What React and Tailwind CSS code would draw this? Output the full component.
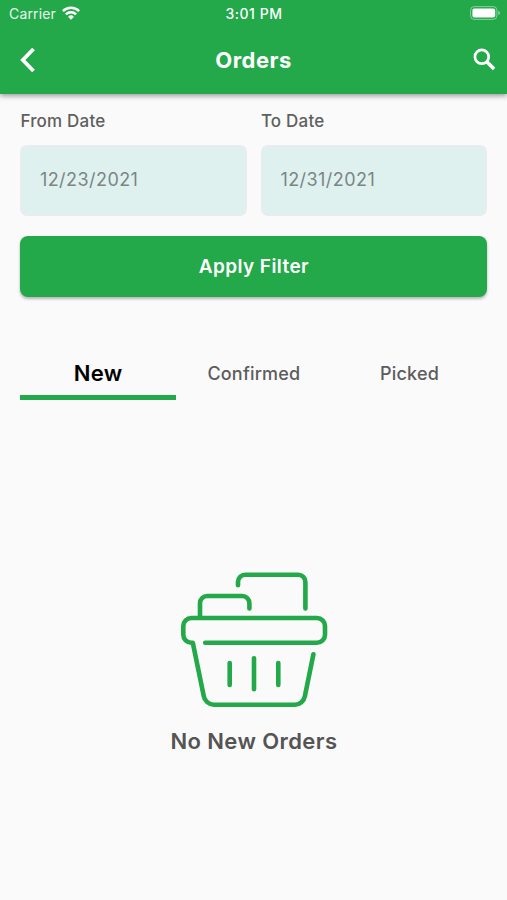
import React, { useState } from 'react';

const TABS = ['New', 'Confirmed', 'Picked'];

const App = () => {
    const [activeTab, setActiveTab] = useState('New');

    return (
        <div className="w-[507px] h-[900px] overflow-hidden flex flex-col bg-[#fafafa] font-['Inter','Liberation_Sans',sans-serif]">
            <header className="h-[94px] shrink-0 bg-[#23a84a] text-white shadow-[0_2px_5px_rgba(0,0,0,0.38)]">
                <StatusBar />
                <div className="h-[64px] grid grid-cols-[1fr_auto_1fr] items-center pl-[20px] pr-[10px]">
                    <button type="button" aria-label="Back" className="justify-self-start">
                        <BackIcon />
                    </button>
                    <h1 className="text-[22px] leading-[28px] font-bold tracking-[0.45px] -translate-x-[5px]">Orders</h1>
                    <button type="button" aria-label="Search" className="justify-self-end">
                        <SearchIcon />
                    </button>
                </div>
            </header>

            <main className="flex-1 flex flex-col pl-[20.4px] pr-[19.6px] pt-[16px]">
                <div className="grid grid-cols-2 gap-[14px]">
                    <DateField label="From Date" value="12/23/2021" />
                    <DateField label="To Date" value="12/31/2021" />
                </div>

                <button type="button" className="mt-[20px] h-[60.5px] w-full shrink-0 rounded-[8px] bg-[#23a84a] pt-[2px] text-white text-[19px] font-semibold tracking-[0.4px] shadow-[0_2px_3px_rgba(0,0,0,0.28)]">
                    Apply Filter
                </button>

                <nav className="mt-[49px] h-[54.5px] shrink-0 grid grid-cols-3">
                    {TABS.map((tab) => (
                        <Tab key={tab} label={tab} active={tab === activeTab} onClick={() => setActiveTab(tab)} />
                    ))}
                </nav>

                <div className="mt-[172px] flex flex-col items-center">
                    <BasketIcon />
                    <p className="mt-[17px] text-[22px] leading-[32px] font-semibold tracking-[0.4px] text-[#545454]">No {activeTab} Orders</p>
                </div>
            </main>
        </div>
    );
};

const StatusBar = () => (
    <div className="h-[28px] grid grid-cols-[1fr_auto_1fr] items-center pl-[9px] pr-[6px] text-[14px] leading-[28px]">
        <div className="flex items-center gap-[6px]">
            <span className="tracking-[0.15px] text-white/90">Carrier</span>
            <WifiIcon />
        </div>
        <span className="font-medium tracking-[0.5px] -translate-x-px">3:01 PM</span>
        <div className="justify-self-end -translate-y-px">
            <BatteryIcon />
        </div>
    </div>
);

const DateField = ({ label, value }) => (
    <div className="flex flex-col">
        <label className="text-[17px] leading-[22px] font-medium tracking-[0.2px] text-[#5f5f5f]">{label}</label>
        <div className="mt-[13px] h-[71px] flex items-center rounded-[7px] border-2 border-[#e7ecef] bg-[#dff1ef] pl-[17.5px] pb-[3px] text-[18px] tracking-[0.45px] text-[#7b8584]">
            {value}
        </div>
    </div>
);

const Tab = ({ label, active, onClick }) => (
    <button
        type="button"
        onClick={onClick}
        className={`border-b-[5px] pt-[6px] ${active ? 'border-[#23a84a] text-black text-[22px] font-semibold tracking-[0.3px]' : 'border-transparent text-[#5c5c5c] text-[18px] font-medium tracking-[0.2px]'}`}
    >
        {label}
    </button>
);

const BackIcon = () => (
    <svg width="16" height="26" viewBox="0 0 16 26" fill="none" stroke="currentColor" strokeWidth="3.8">
        <path d="M13.5 2 2.8 13l10.7 11" />
    </svg>
);

const SearchIcon = () => (
    <svg width="24" height="24" viewBox="0 0 24 24" fill="none" stroke="currentColor">
        <circle cx="8.8" cy="8.8" r="6.9" strokeWidth="2.7" />
        <path d="m13.8 13.8 7.3 7.3" strokeWidth="3.5" />
    </svg>
);

const WifiIcon = () => (
    <svg width="18" height="14" viewBox="0 0 18 14" fill="none" stroke="currentColor" strokeWidth="2.5" className="-translate-y-px">
        <path d="M.9 5.1a11.5 11.5 0 0 1 16.2 0" />
        <path d="M3.9 8.3a7.2 7.2 0 0 1 10.2 0" />
        <path d="M9 13.8 6.1 10.8a4.1 4.1 0 0 1 5.8 0z" fill="currentColor" stroke="none" />
    </svg>
);

const BatteryIcon = () => (
    <svg width="31" height="14" viewBox="0 0 31 14" fill="none">
        <rect x=".6" y=".6" width="26.3" height="12.8" rx="3.6" stroke="white" strokeOpacity=".45" />
        <rect x="2.4" y="2.4" width="22.8" height="9.2" rx="2" fill="white" />
        <path d="M28.3 4.8v4.4c1-.4 1.6-1.2 1.6-2.2s-.6-1.8-1.6-2.2z" fill="white" fillOpacity=".5" />
    </svg>
);

const BasketIcon = () => (
    <svg width="148" height="136" viewBox="0 0 148 136" fill="none" stroke="#23a84a" strokeWidth="4.6" strokeLinecap="round" strokeLinejoin="round">
        <path d="M58 13.3V10a7.2 7.2 0 0 1 7.2-7.2h53a7.2 7.2 0 0 1 7.2 7.2v26.4" />
        <path d="M20 45V31.2a7.2 7.2 0 0 1 7.2-7.2h35a7.2 7.2 0 0 1 7.2 7.2v5.2" />
        <path d="M25.2 70.8H137a8 8 0 0 0 8-8V54a8 8 0 0 0-8-8H11.3a8 8 0 0 0-8 8v8.8a8 8 0 0 0 8 8h1.5l10.9 53a10.5 10.5 0 0 0 10.2 8.9h81a10.5 10.5 0 0 0 10-8.6l8.5-41.8" />
        <path d="M49.7 91v22M74 86.2v31M98.3 91v22" />
    </svg>
);

export default App;
